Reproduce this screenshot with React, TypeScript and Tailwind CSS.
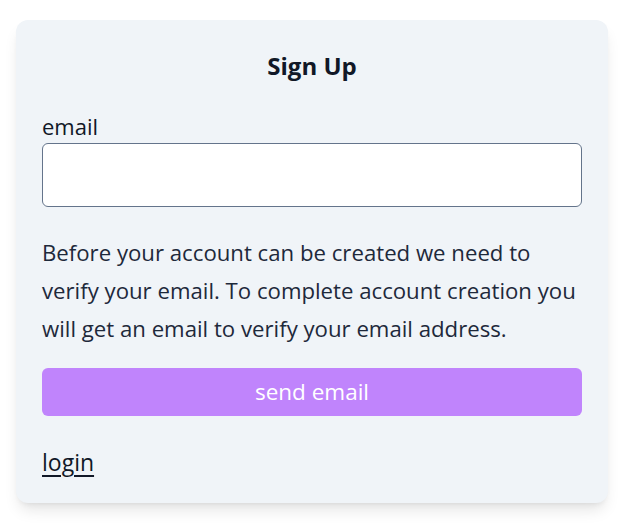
import React from "react";

export default function App() {
  return (
    <div className="min-h-[529px] bg-white pl-4 pt-5" style={{ fontFamily: '"Open Sans", "Noto Sans", sans-serif' }}>
      <div className="w-[592px] rounded-xl bg-[#f0f4f8] px-[26px] pb-[27px] pt-[31px] shadow-lg">
        <h1 className="text-center text-[24px] font-bold leading-[30px] text-[#111827]">Sign Up</h1>
        <label className="mb-[3px] mt-[31px] block text-[22px] leading-[28px] text-[#111827]">email</label>
        <input
          type="email"
          className="block h-16 w-full rounded-md border border-[#64748b] bg-white px-3 text-[20px] outline-none"
        />
        <p className="mt-[27px] whitespace-nowrap text-[22.2px] leading-[38px] text-[#1e293b]">
          Before your account can be created we need to
          <br />
          verify your email. To complete account creation you
          <br />
          will get an email to verify your email address.
        </p>
        <button className="mt-5 flex h-12 w-full items-center justify-center rounded-md bg-[#c084fc] text-[22.5px] text-white">
          send email
        </button>
        <div className="mt-8 text-[23px] leading-[28px] text-[#111827]">
          <a href="#" className="underline underline-offset-4">login</a>
        </div>
      </div>
    </div>
  );
}
